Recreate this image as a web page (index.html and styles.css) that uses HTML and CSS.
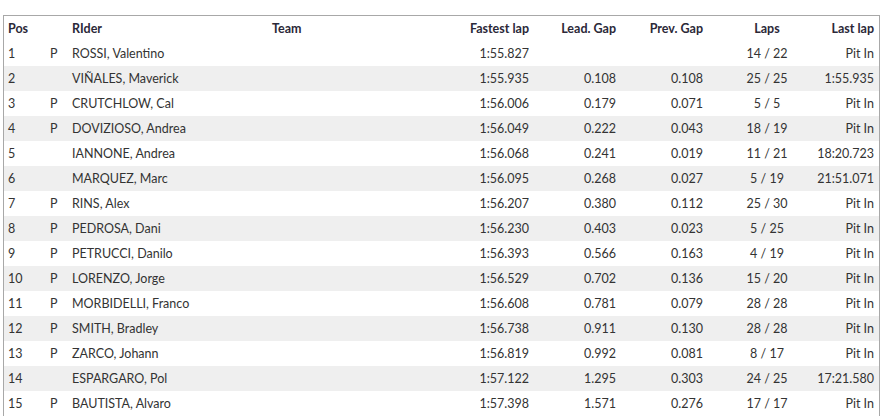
FILE: index.html
```html
<!DOCTYPE html>
<html>
<head>
<meta charset="utf-8">
<link rel="stylesheet" href="styles.css">
</head>
<body>
<div class="wrap">
<table class="results">
<colgroup>
<col class="c-pos"><col class="c-p"><col class="c-rider"><col class="c-team"><col class="c-fast"><col class="c-lead"><col class="c-prev"><col class="c-laps"><col class="c-last">
</colgroup>
<thead>
<tr><th class="l pos">Pos</th><th class="l"></th><th class="l">RIder</th><th class="l">Team</th><th class="r">Fastest lap</th><th class="r">Lead. Gap</th><th class="r">Prev. Gap</th><th class="c laps">Laps</th><th class="r last">Last lap</th></tr>
</thead>
<tbody>
<tr><td class="l pos">1</td><td class="l">P</td><td class="l">ROSSI, Valentino</td><td></td><td class="r">1:55.827</td><td class="r"></td><td class="r"></td><td class="c laps">14 / 22</td><td class="r last">Pit In</td></tr>
<tr><td class="l pos">2</td><td class="l"></td><td class="l">VIÑALES, Maverick</td><td></td><td class="r">1:55.935</td><td class="r">0.108</td><td class="r">0.108</td><td class="c laps">25 / 25</td><td class="r last">1:55.935</td></tr>
<tr><td class="l pos">3</td><td class="l">P</td><td class="l">CRUTCHLOW, Cal</td><td></td><td class="r">1:56.006</td><td class="r">0.179</td><td class="r">0.071</td><td class="c laps">5 / 5</td><td class="r last">Pit In</td></tr>
<tr><td class="l pos">4</td><td class="l">P</td><td class="l">DOVIZIOSO, Andrea</td><td></td><td class="r">1:56.049</td><td class="r">0.222</td><td class="r">0.043</td><td class="c laps">18 / 19</td><td class="r last">Pit In</td></tr>
<tr><td class="l pos">5</td><td class="l"></td><td class="l">IANNONE, Andrea</td><td></td><td class="r">1:56.068</td><td class="r">0.241</td><td class="r">0.019</td><td class="c laps">11 / 21</td><td class="r last">18:20.723</td></tr>
<tr><td class="l pos">6</td><td class="l"></td><td class="l">MARQUEZ, Marc</td><td></td><td class="r">1:56.095</td><td class="r">0.268</td><td class="r">0.027</td><td class="c laps">5 / 19</td><td class="r last">21:51.071</td></tr>
<tr><td class="l pos">7</td><td class="l">P</td><td class="l">RINS, Alex</td><td></td><td class="r">1:56.207</td><td class="r">0.380</td><td class="r">0.112</td><td class="c laps">25 / 30</td><td class="r last">Pit In</td></tr>
<tr><td class="l pos">8</td><td class="l">P</td><td class="l">PEDROSA, Dani</td><td></td><td class="r">1:56.230</td><td class="r">0.403</td><td class="r">0.023</td><td class="c laps">5 / 25</td><td class="r last">Pit In</td></tr>
<tr><td class="l pos">9</td><td class="l">P</td><td class="l">PETRUCCI, Danilo</td><td></td><td class="r">1:56.393</td><td class="r">0.566</td><td class="r">0.163</td><td class="c laps">4 / 19</td><td class="r last">Pit In</td></tr>
<tr><td class="l pos">10</td><td class="l">P</td><td class="l">LORENZO, Jorge</td><td></td><td class="r">1:56.529</td><td class="r">0.702</td><td class="r">0.136</td><td class="c laps">15 / 20</td><td class="r last">Pit In</td></tr>
<tr><td class="l pos">11</td><td class="l">P</td><td class="l">MORBIDELLI, Franco</td><td></td><td class="r">1:56.608</td><td class="r">0.781</td><td class="r">0.079</td><td class="c laps">28 / 28</td><td class="r last">Pit In</td></tr>
<tr><td class="l pos">12</td><td class="l">P</td><td class="l">SMITH, Bradley</td><td></td><td class="r">1:56.738</td><td class="r">0.911</td><td class="r">0.130</td><td class="c laps">28 / 28</td><td class="r last">Pit In</td></tr>
<tr><td class="l pos">13</td><td class="l">P</td><td class="l">ZARCO, Johann</td><td></td><td class="r">1:56.819</td><td class="r">0.992</td><td class="r">0.081</td><td class="c laps">8 / 17</td><td class="r last">Pit In</td></tr>
<tr><td class="l pos">14</td><td class="l"></td><td class="l">ESPARGARO, Pol</td><td></td><td class="r">1:57.122</td><td class="r">1.295</td><td class="r">0.303</td><td class="c laps">24 / 25</td><td class="r last">17:21.580</td></tr>
<tr><td class="l pos">15</td><td class="l">P</td><td class="l">BAUTISTA, Alvaro</td><td></td><td class="r">1:57.398</td><td class="r">1.571</td><td class="r">0.276</td><td class="c laps">17 / 17</td><td class="r last">Pit In</td></tr>
</tbody>
</table>
</div>
</body>
</html>
```
FILE: styles.css
```css
html, body {
  margin: 0;
  padding: 0;
  background: #ffffff;
}
body {
  font-family: Lato, "Liberation Sans", sans-serif;
  font-size: 12.5px;
  color: #333333;
}
.wrap {
  margin: 15px 0 0 3px;
  width: 875px;
  border: 1px solid #a8a8a8;
  border-bottom: none;
}
.results {
  width: 875px;
  border-collapse: collapse;
  table-layout: fixed;
}
.c-pos { width: 41px; }
.c-p { width: 22px; }
.c-rider { width: 200px; }
.c-team { width: 178px; }
.c-fast { width: 89px; }
.c-lead { width: 87px; }
.c-prev { width: 87px; }
.c-laps { width: 98px; }
.c-last { width: 73px; }
.results th, .results td {
  height: 25px;
  padding: 0 5px;
  line-height: 25px;
  white-space: nowrap;
  box-sizing: border-box;
}
.results th {
  font-weight: 700;
  color: #2b2838;
}
.results .pos { padding-left: 4px; }
.results .l { text-align: left; }
.results .r { text-align: right; }
.results .c { text-align: center; }
.results .laps { padding-left: 25px; padding-right: 5px; }
.results tbody tr:nth-child(even) { background: #efefef; }
```
